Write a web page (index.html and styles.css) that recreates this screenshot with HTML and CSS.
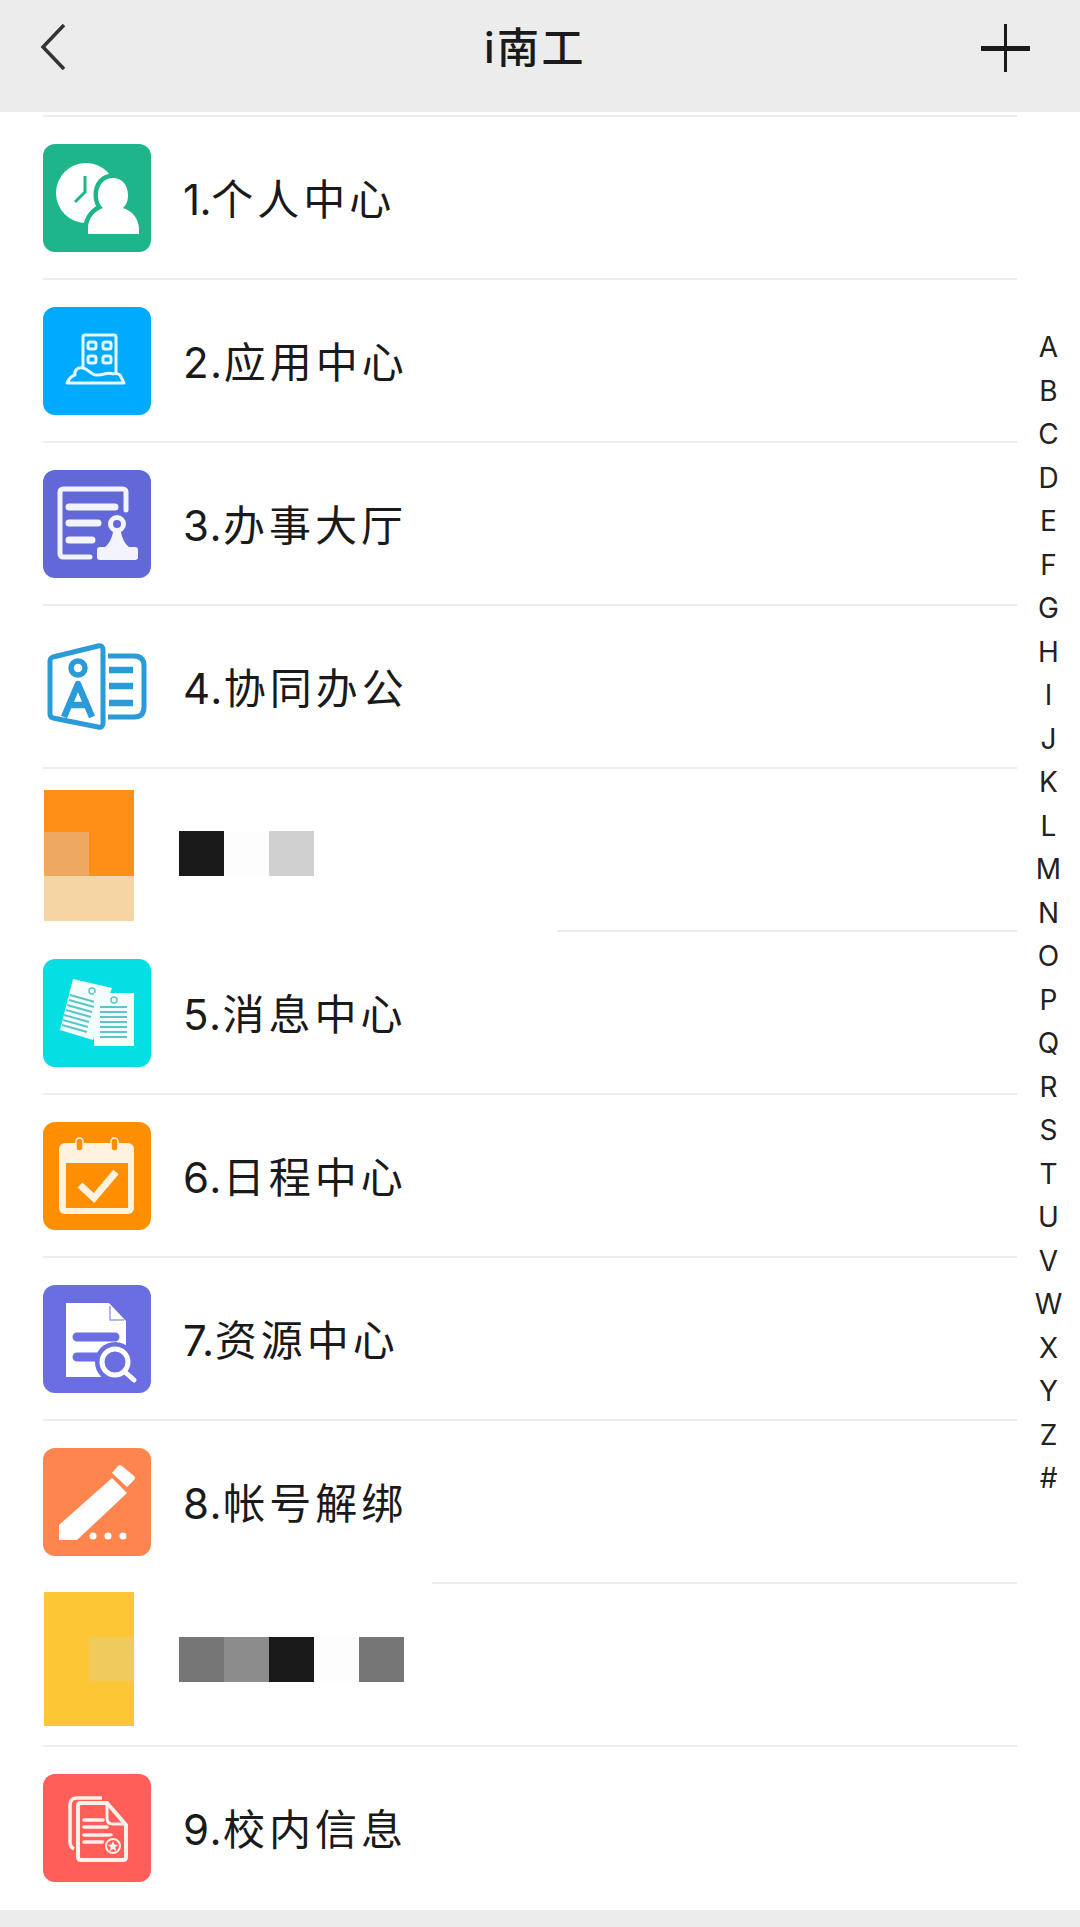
FILE: index.html
```html
<!DOCTYPE html>
<html lang="zh-CN">
<head>
    <meta charset="UTF-8">
    <meta name="viewport" content="width=device-width, initial-scale=1.0">
    <title>i南工</title>
    <link rel="stylesheet" href="styles.css">
</head>
<body>
    <header class="topbar">
        <svg class="topbar-icon" viewBox="0 0 50 50">
            <path d="M24 3 L3 25 L24 47" class="back-path"/>
        </svg>
        <h1 class="topbar-title">i南工</h1>
        <svg class="topbar-icon" viewBox="0 0 50 50">
            <rect x="1" y="24" width="49" height="5" fill="#1a1a1a"/>
            <rect x="24" y="2" width="3" height="48" fill="#1a1a1a"/>
        </svg>
    </header>

    <div class="page">
        <main class="list">
            <div class="divider"></div>

            <div class="row">
                <span class="tile tile-green">
                    <svg viewBox="0 0 108 108">
                        <circle cx="43" cy="49" r="30" fill="#fff"/>
                        <path d="M42 32 V48 L32 58" fill="none" stroke="#1fb58b" stroke-width="3"/>
                        <path d="M45 90 V84 C45 74 52 67 60 64 C56 60 55 56 55 51 C55 41 61 34 70 34 C79 34 85 41 85 51 C85 56 84 60 80 64 C89 67 96 74 96 86 V90 Z" fill="#fff" stroke="#1fb58b" stroke-width="9" paint-order="stroke"/>
                    </svg>
                </span>
                <span class="row-text"><span class="num num-one">1.</span>个人中心</span>
            </div>
            <div class="divider"></div>

            <div class="row">
                <span class="tile tile-blue">
                    <svg viewBox="0 0 108 108" fill="none" stroke="#e6f7ff" stroke-width="3" stroke-linejoin="round">
                        <path d="M40 62 V30 A2 2 0 0 1 42 28 H71 A2 2 0 0 1 73 30 V66"/>
                        <rect x="45" y="35" width="8" height="7" rx="2"/>
                        <rect x="60" y="35" width="8" height="7" rx="2"/>
                        <rect x="45" y="49" width="8" height="7" rx="2"/>
                        <rect x="60" y="49" width="8" height="7" rx="2"/>
                        <path d="M24 76 H81 L77 68 C74 66 72 66 70 67 C64 64 60 69 54 68 C48 69 46 62 40 61 C34 60 31 64 32 68 C28 69 26 72 24 76 Z"/>
                    </svg>
                </span>
                <span class="row-text"><span class="num">2.</span>应用中心</span>
            </div>
            <div class="divider"></div>

            <div class="row">
                <span class="tile tile-purple">
                    <svg viewBox="0 0 108 108" fill="none" stroke="#f3f4fd" stroke-linecap="round">
                        <path d="M47 87 H20 A3 3 0 0 1 17 84 V22 A3 3 0 0 1 20 19 H80 A3 3 0 0 1 83 22 V40" stroke-width="5"/>
                        <path d="M26 37 H72 M26 53 H55 M26 70 H49" stroke-width="7"/>
                        <circle cx="74" cy="54" r="6.5" stroke-width="5"/>
                        <path d="M70 62 H78 C79 68 82 74 86 77 H92 A3 3 0 0 1 95 80 V87 A3 3 0 0 1 92 90 H57 A3 3 0 0 1 54 87 V80 A3 3 0 0 1 57 77 H62 C66 74 69 68 70 62 Z" fill="#f3f4fd" stroke="none"/>
                    </svg>
                </span>
                <span class="row-text"><span class="num">3.</span>办事大厅</span>
            </div>
            <div class="divider"></div>

            <div class="row">
                <span class="tile">
                    <svg viewBox="0 0 108 108" fill="none" stroke="#2a9bd8" stroke-linejoin="round">
                        <path d="M7 28 Q7 25 10 24 L55 13 Q60 12 60 17 V90 Q60 95 55 94 L10 85 Q7 84 7 81 Z" stroke-width="5"/>
                        <path d="M65 23 H91 Q101 23 101 33 V74 Q101 84 91 84 H65" stroke-width="5"/>
                        <path d="M66 37 H90 M66 53 H90 M66 70 H90" stroke-width="6.5"/>
                        <circle cx="35" cy="35" r="7" stroke-width="5.5"/>
                        <path d="M21 84 L35 51 L49 84 M26 72 H44" stroke-width="6.5"/>
                    </svg>
                </span>
                <span class="row-text"><span class="num">4.</span>协同办公</span>
            </div>
            <div class="divider"></div>

            <div class="row row-mosaic">
                <div class="thumb thumb-orange">
                    <div class="patch-orange"></div>
                    <div class="patch-pale"></div>
                </div>
                <div class="blocks blocks-orange">
                    <span class="block b-black"></span>
                    <span class="block b-white"></span>
                    <span class="block b-light"></span>
                </div>
            </div>
            <div class="divider divider-cut-a"></div>

            <div class="row">
                <span class="tile tile-cyan">
                    <svg viewBox="0 0 108 108">
                        <path d="M30 20 L69 29 L50 81 L17 71 Z" fill="#f4fdfd"/>
                        <path d="M27 36 L52 43 M26 41 L51 48 M24 46 L49 53 M23 51 L48 58 M21 56 L46 63 M20 61 L45 68 M19 66 L44 73" stroke="#5cc5c8" stroke-width="2"/>
                        <circle cx="49" cy="32" r="3" fill="none" stroke="#5cc5c8" stroke-width="1.5"/>
                        <rect x="51" y="34" width="40" height="53" fill="#f4fdfd"/>
                        <path d="M57 48 H84 M57 53 H84 M57 58 H84 M57 63 H84 M57 68 H84 M57 73 H84 M57 78 H84" stroke="#5cc5c8" stroke-width="2"/>
                        <circle cx="71" cy="41" r="3" fill="none" stroke="#5cc5c8" stroke-width="1.5"/>
                    </svg>
                </span>
                <span class="row-text"><span class="num">5.</span>消息中心</span>
            </div>
            <div class="divider"></div>

            <div class="row">
                <span class="tile tile-orange">
                    <svg viewBox="0 0 108 108">
                        <rect x="16" y="21" width="75" height="71" rx="6" fill="#fff3e0"/>
                        <rect x="23" y="41" width="62" height="45" fill="#ff8f00"/>
                        <rect x="33" y="16" width="7" height="13" rx="3.5" fill="#ff8f00" stroke="#fff3e0" stroke-width="1.5"/>
                        <rect x="68" y="16" width="7" height="13" rx="3.5" fill="#ff8f00" stroke="#fff3e0" stroke-width="1.5"/>
                        <path d="M37 63 L51 76 L73 50" fill="none" stroke="#fff3e0" stroke-width="7"/>
                    </svg>
                </span>
                <span class="row-text"><span class="num">6.</span>日程中心</span>
            </div>
            <div class="divider"></div>

            <div class="row">
                <span class="tile tile-indigo">
                    <svg viewBox="0 0 108 108">
                        <path d="M23 18 H66 L83 36 V92 H23 Z" fill="#fff"/>
                        <path d="M67 21 V35 H81" fill="none" stroke="#9a9cec" stroke-width="1.5"/>
                        <path d="M34 52 H72 M34 72 H60" stroke="#6a6ee0" stroke-width="9" stroke-linecap="round"/>
                        <circle cx="72" cy="77" r="20" fill="#6a6ee0"/>
                        <circle cx="72" cy="77" r="13" fill="#6a6ee0" stroke="#fff" stroke-width="5"/>
                        <path d="M82 87 L91 95" stroke="#fff" stroke-width="5" stroke-linecap="round"/>
                    </svg>
                </span>
                <span class="row-text"><span class="num num-seven">7.</span>资源中心</span>
            </div>
            <div class="divider"></div>

            <div class="row">
                <span class="tile tile-coral">
                    <svg viewBox="0 0 108 108" fill="#fff">
                        <path d="M16 77 L69 30 L84 45 L34 92 H16 Z"/>
                        <path d="M75 18 Q77 16 79 18 L91 28 Q93 30 91 32 L84 39 L69 25 Z"/>
                        <circle cx="50" cy="88" r="3.5"/>
                        <circle cx="65" cy="88" r="3.5"/>
                        <circle cx="80" cy="88" r="3.5"/>
                    </svg>
                </span>
                <span class="row-text"><span class="num">8.</span>帐号解绑</span>
            </div>
            <div class="divider divider-cut-b"></div>

            <div class="row row-mosaic">
                <div class="thumb thumb-yellow">
                    <div class="patch-yellow"></div>
                </div>
                <div class="blocks blocks-yellow">
                    <span class="block b-gray1"></span>
                    <span class="block b-gray2"></span>
                    <span class="block b-black"></span>
                    <span class="block b-white"></span>
                    <span class="block b-gray1"></span>
                </div>
            </div>
            <div class="divider"></div>

            <div class="row">
                <span class="tile tile-red">
                    <svg viewBox="0 0 108 108" fill="none" stroke="#fff0ee">
                        <path d="M59 24 H34 Q27 24 27 31 V68 Q27 73 31 75" stroke-width="3.5"/>
                        <path d="M38 29 H64 L83 51 V83 Q83 86 80 86 H38 Q35 86 35 83 V32 Q35 29 38 29 Z" stroke-width="4"/>
                        <path d="M64 30 V44 Q64 50 70 50 H82" stroke-width="3"/>
                        <path d="M41 46 H60 M41 53 H64 M41 61 H68 M41 68 H60" stroke-width="3.5" stroke-linecap="round"/>
                        <circle cx="70" cy="72" r="10" fill="#ff5f58" stroke="none"/>
                        <circle cx="70" cy="72" r="7" stroke-width="2"/>
                        <path d="M70 67 L71.5 70.5 L75 71 L72.3 73.2 L73.2 77 L70 75 L66.8 77 L67.7 73.2 L65 71 L68.5 70.5 Z" fill="#fff0ee" stroke="none"/>
                    </svg>
                </span>
                <span class="row-text"><span class="num">9.</span>校内信息</span>
            </div>
        </main>

        <aside class="index">
            <span>A</span><span>B</span><span>C</span><span>D</span><span>E</span><span>F</span><span>G</span>
            <span>H</span><span>I</span><span>J</span><span>K</span><span>L</span><span>M</span><span>N</span>
            <span>O</span><span>P</span><span>Q</span><span>R</span><span>S</span><span>T</span><span>U</span>
            <span>V</span><span>W</span><span>X</span><span>Y</span><span>Z</span><span>#</span>
        </aside>
    </div>

    <div class="bottombar"></div>
</body>
</html>
```

FILE: styles.css
```css
body {
    margin: 0;
    height: 1927px;
    background-color: #fff;
    color: #1a1a1a;
    font-family: Inter, "Noto Sans CJK SC", sans-serif;
    overflow: hidden;
}
.topbar {
    display: flex;
    justify-content: space-between;
    align-items: center;
    height: 94px;
    padding: 0 50px 18px 40px;
    background-color: #ececec;
}
.topbar-icon {
    display: block;
    width: 50px;
    height: 50px;
}
.back-path {
    fill: none;
    stroke: #333;
    stroke-width: 3.5;
}
.topbar-title {
    margin: 2px 0 0;
    font-size: 42px;
    font-weight: 500;
    line-height: 50px;
    letter-spacing: 2.5px;
}
.page {
    display: flex;
    height: 1798px;
}
.list {
    flex: 1;
    margin-left: 43px;
    padding-top: 3px;
}
.divider {
    height: 2px;
    background-color: #ededed;
}
.divider-cut-a {
    margin-left: 514px;
}
.divider-cut-b {
    margin-left: 389px;
}
.row {
    display: flex;
    align-items: center;
    gap: 32px;
    height: 161px;
}
.tile {
    display: block;
    flex: none;
    width: 108px;
    height: 108px;
    border-radius: 12px;
    overflow: hidden;
}
.tile svg {
    display: block;
    width: 108px;
    height: 108px;
}
.tile-green { background-color: #1fb58b; }
.tile-blue { background-color: #00aaff; }
.tile-purple { background-color: #6268d8; }
.tile-cyan { background-color: #05dfe3; }
.tile-orange { background-color: #ff8f00; }
.tile-indigo { background-color: #6a6ee0; }
.tile-coral { background-color: #ff854f; }
.tile-red { background-color: #ff5f58; }
.row-text {
    margin-top: 4px;
    font-size: 42px;
    letter-spacing: 4px;
    line-height: 1;
    color: #1a1a1a;
}
.num {
    letter-spacing: 1.5px;
}
.num-one {
    letter-spacing: -0.5px;
}
.num-seven {
    letter-spacing: 0.5px;
}
.row-mosaic {
    align-items: flex-start;
    gap: 45px;
    padding-left: 1px;
}
.thumb {
    display: grid;
    grid-template-columns: 45px 45px;
    flex: none;
}
.thumb-orange {
    grid-template-rows: 42px 44px 45px;
    margin-top: 21px;
    background-color: #ff8f17;
}
.patch-orange {
    grid-column: 1;
    grid-row: 2;
    background-color: #efa85f;
}
.patch-pale {
    grid-column: 1 / 3;
    grid-row: 3;
    background-color: #f6d5a4;
}
.thumb-yellow {
    grid-template-rows: 45px 44px 45px;
    margin-top: 8px;
    background-color: #fdc635;
}
.patch-yellow {
    grid-column: 2;
    grid-row: 2;
    background-color: #eecb5c;
}
.blocks {
    display: flex;
}
.blocks-orange {
    margin-top: 62px;
}
.blocks-yellow {
    margin-top: 53px;
}
.block {
    width: 45px;
    height: 45px;
}
.b-black { background-color: #1a1a1a; }
.b-white { background-color: #fdfdfd; }
.b-light { background-color: #d0d0d0; }
.b-gray1 { background-color: #767676; }
.b-gray2 { background-color: #8c8c8c; }
.index {
    display: flex;
    flex-direction: column;
    align-items: center;
    flex: none;
    width: 63px;
    padding-top: 214px;
    font-size: 28px;
    color: #222;
}
.index span {
    height: 43.5px;
    line-height: 43.5px;
}
.bottombar {
    height: 17px;
    background-color: #ececec;
}
```
